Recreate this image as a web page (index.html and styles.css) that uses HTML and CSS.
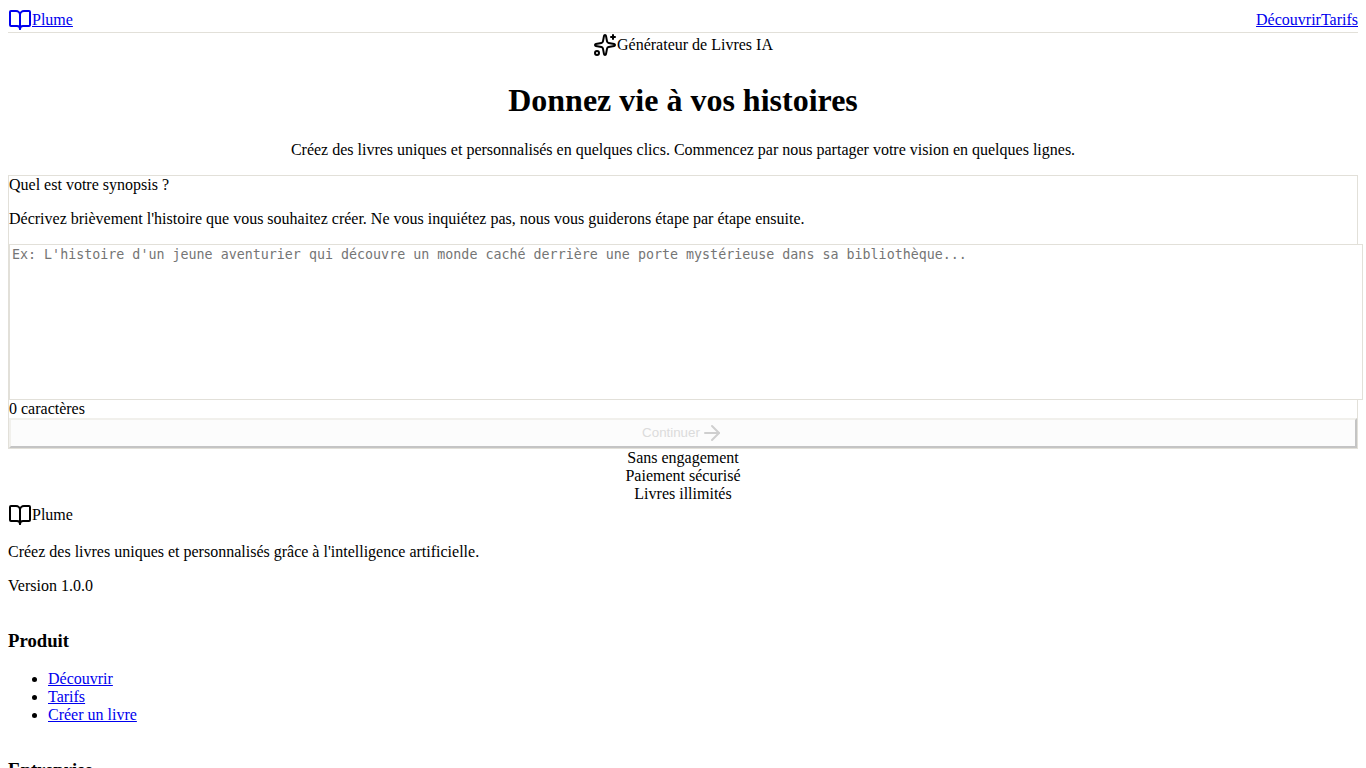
FILE: index.html
```
<!DOCTYPE html>
<html lang="fr">
  <head>
    <meta charset="UTF-8" />
    <meta name="viewport" content="width=device-width, initial-scale=1.0" />
    <title>Plume</title>
    <link rel="stylesheet" href="styles.css">
  </head>
  <body>
    <header class="header">
      <a href="#" class="logo">
        <svg class="icon" viewBox="0 0 24 24">
          <path d="M12 7v14" />
          <path d="M3 18a1 1 0 0 1-1-1V4a1 1 0 0 1 1-1h5a4 4 0 0 1 4 4 4 4 0 0 1 4-4h5a1 1 0 0 1 1 1v13a1 1 0 0 1-1 1h-6a3 3 0 0 0-3 3 3 3 0 0 0-3-3z" />
        </svg>
        <span>Plume</span>
      </a>
      <nav class="nav">
        <a href="#">Découvrir</a>
        <a href="#">Tarifs</a>
      </nav>
    </header>

    <main>
      <section class="hero">
        <div class="badge">
          <svg class="icon" viewBox="0 0 24 24">
            <path d="M11.017 2.814a1 1 0 0 1 1.966 0l1.051 5.558a2 2 0 0 0 1.594 1.594l5.558 1.051a1 1 0 0 1 0 1.966l-5.558 1.051a2 2 0 0 0-1.594 1.594l-1.051 5.558a1 1 0 0 1-1.966 0l-1.051-5.558a2 2 0 0 0-1.594-1.594l-5.558-1.051a1 1 0 0 1 0-1.966l5.558-1.051a2 2 0 0 0 1.594-1.594z" />
            <path d="M20 2v4" />
            <path d="M22 4h-4" />
            <circle cx="4" cy="20" r="2" />
          </svg>
          <span>Générateur de Livres IA</span>
        </div>
        <h1>Donnez vie à vos histoires</h1>
        <p>Créez des livres uniques et personnalisés en quelques clics. Commencez par nous partager votre vision en quelques lignes.</p>
      </section>

      <form class="card">
        <label for="synopsis">Quel est votre synopsis ?</label>
        <p>Décrivez brièvement l'histoire que vous souhaitez créer. Ne vous inquiétez pas, nous vous guiderons étape par étape ensuite.</p>
        <textarea id="synopsis" class="synopsis" placeholder="Ex: L'histoire d'un jeune aventurier qui découvre un monde caché derrière une porte mystérieuse dans sa bibliothèque..."></textarea>
        <div>0 caractères</div>
        <button type="submit" class="submit-button" disabled>
          Continuer
          <svg class="icon" viewBox="0 0 24 24">
            <path d="M5 12h14" />
            <path d="m12 5 7 7-7 7" />
          </svg>
        </button>
      </form>

      <div class="features">
        <div>Sans engagement</div>
        <div>Paiement sécurisé</div>
        <div>Livres illimités</div>
      </div>
    </main>

    <footer class="footer">
      <div>
        <div class="logo">
          <svg class="icon" viewBox="0 0 24 24">
            <path d="M12 7v14" />
            <path d="M3 18a1 1 0 0 1-1-1V4a1 1 0 0 1 1-1h5a4 4 0 0 1 4 4 4 4 0 0 1 4-4h5a1 1 0 0 1 1 1v13a1 1 0 0 1-1 1h-6a3 3 0 0 0-3 3 3 3 0 0 0-3-3z" />
          </svg>
          <span>Plume</span>
        </div>
        <p>Créez des livres uniques et personnalisés grâce à l'intelligence artificielle.</p>
        <p>Version 1.0.0</p>
      </div>
      <div>
        <h3>Produit</h3>
        <ul>
          <li><a href="#">Découvrir</a></li>
          <li><a href="#">Tarifs</a></li>
          <li><a href="#">Créer un livre</a></li>
        </ul>
      </div>
      <div>
        <h3>Entreprise</h3>
      </div>
    </footer>
  </body>
</html>
```

FILE: styles.css
```
body {
  margin: 0;
  padding: 8px;
  font-family: "Liberation Serif", serif;
  color: #000;
  background-color: #fff;
}

a {
  color: #0000ee;
}

.icon {
  width: 24px;
  height: 24px;
  fill: none;
  stroke: currentColor;
  stroke-width: 2;
  stroke-linecap: round;
  stroke-linejoin: round;
}

/* header */
.header {
  display: flex;
  justify-content: space-between;
  align-items: center;
  border-bottom: 1px solid #e2e0d9;
}

.logo {
  display: flex;
  align-items: center;
}

.nav {
  display: flex;
}

/* hero */
.hero {
  text-align: center;
}

.badge {
  display: flex;
  justify-content: center;
  align-items: center;
  padding-bottom: 4px;
}

/* synopsis form */
.card {
  border: 1px solid #e2e0d9;
}

/* padding and border come on top of the full width */
.synopsis {
  display: block;
  width: 100%;
  min-height: 150px;
  box-sizing: content-box;
  padding: 2px;
  border: 1px solid #e2e0d9;
  font-family: "DejaVu Sans Mono", monospace;
  resize: none;
}

.submit-button {
  display: flex;
  justify-content: center;
  align-items: center;
  width: 100%;
  padding: 1px 6px;
  border: 2px solid;
  border-color: #f1f0ec #c4c4c4 #c4c4c4 #f1f0ec;
  background-color: #fcfcfc;
  color: #dbdbdb;
  font-family: "Liberation Sans", Arial, sans-serif;
}

.submit-button .icon {
  stroke: #cfcfcf;
}

.features {
  text-align: center;
}

/* footer */
.footer {
  display: grid;
}
```
